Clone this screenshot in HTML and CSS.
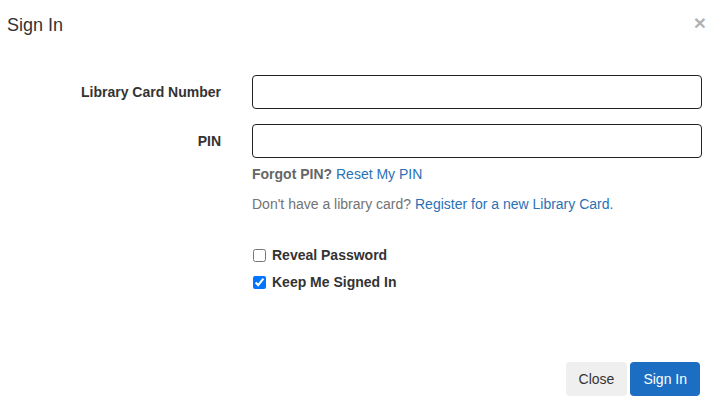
FILE: index.html
```html
<!DOCTYPE html>
<html lang="en">
<head>
    <meta charset="UTF-8">
    <meta name="viewport" content="width=device-width, initial-scale=1.0">
    <title>Sign In</title>
    <link rel="stylesheet" href="styles.css">
</head>
<body>
    <div class="modal">
        <div class="modal-header">
            <h4 class="modal-title">Sign In</h4>
            <button type="button" class="close" aria-label="Close">&times;</button>
        </div>
        <form class="modal-body" id="loginForm">
            <div class="form-row">
                <label for="username">Library Card Number</label>
                <input type="text" id="username" name="username">
            </div>
            <div class="form-row">
                <label for="password">PIN</label>
                <input type="password" id="password" name="password">
            </div>
            <div class="form-row">
                <div></div>
                <div class="help">
                    <p class="forgot"><strong>Forgot PIN?</strong> <a href="#">Reset My PIN</a></p>
                    <p class="register">Don't have a library card? <a href="#">Register for a new Library Card.</a></p>
                </div>
            </div>
            <div class="form-row checks">
                <div></div>
                <div>
                    <label class="check"><input type="checkbox" id="showPwd"> Reveal Password</label>
                    <label class="check"><input type="checkbox" id="rememberMe" checked> Keep Me Signed In</label>
                </div>
            </div>
        </form>
        <div class="modal-footer">
            <button type="button" class="btn btn-default">Close</button>
            <button type="submit" class="btn btn-primary" form="loginForm">Sign In</button>
        </div>
    </div>
</body>
</html>
```

FILE: styles.css
```css
body {
    font-family: "Liberation Sans", Arial, sans-serif;
    font-size: 14px;
    color: #333;
    margin: 0;
    padding: 0;
    background-color: #fff;
}
.modal {
    width: 719px;
    height: 411px;
    display: flex;
    flex-direction: column;
}
.modal-header {
    display: flex;
    justify-content: space-between;
    align-items: flex-start;
    padding: 14px 12px 0 7px;
    height: 62px;
    box-sizing: border-box;
}
.modal-title {
    margin: 0;
    font-size: 18px;
    font-weight: normal;
    line-height: 22px;
    color: #333;
}
.close {
    background: none;
    border: 0;
    padding: 0;
    margin-top: 0;
    margin-right: 1px;
    font-size: 21px;
    font-weight: bold;
    line-height: 18px;
    color: #000;
    opacity: 0.3;
    cursor: pointer;
    font-family: "Liberation Sans", Arial, sans-serif;
}
.modal-body {
    padding: 13px 17px 0 0;
    flex: 1;
}
.form-row {
    display: grid;
    grid-template-columns: 221px 1fr;
    column-gap: 31px;
    align-items: center;
    margin-bottom: 15px;
}
.form-row > label {
    text-align: right;
    font-weight: bold;
}
.form-row input[type="text"],
.form-row input[type="password"] {
    height: 34px;
    box-sizing: border-box;
    border: 1px solid #222;
    border-radius: 4px;
    padding: 6px 12px;
    font-size: 14px;
}
.help {
    margin-top: -9px;
}
.help p {
    margin: 0;
    line-height: 20px;
    color: #737373;
}
.forgot strong {
    color: #666;
}
.register {
    margin-top: 10px !important;
}
.help a {
    color: #2a72b5;
    text-decoration: none;
}
.checks {
    margin-top: 31px;
}
.check {
    display: flex;
    align-items: center;
    font-weight: bold;
    line-height: 20px;
    margin-bottom: 7px;
}
.check input {
    margin: 0 6px 0 1px;
    width: 13px;
    height: 13px;
}
.modal-footer {
    display: flex;
    justify-content: flex-end;
    gap: 3px;
    padding: 0 19px 15px 0;
}
.btn {
    font-family: "Liberation Sans", Arial, sans-serif;
    font-size: 14px;
    height: 34px;
    padding: 6px 13px;
    border: 0;
    border-radius: 4px;
    cursor: pointer;
}
.btn-default {
    background-color: #efefef;
    color: #333;
}
.btn-primary {
    background-color: #1b6ec2;
    color: #fff;
}
```
